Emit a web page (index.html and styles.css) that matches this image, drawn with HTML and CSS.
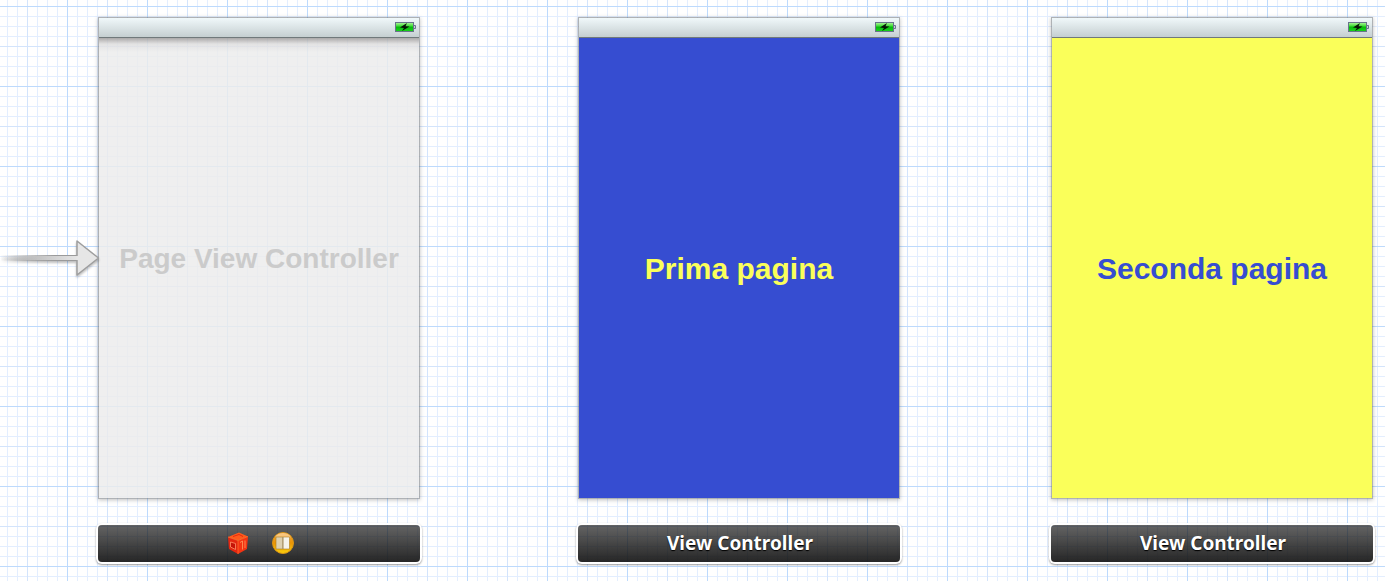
FILE: index.html
```
<!DOCTYPE html>
<html lang="it">
<head>
  <meta charset="UTF-8" />
  <meta name="viewport" content="width=device-width, initial-scale=1.0"/>
  <title>Storyboard</title>
  <link rel="stylesheet" href="styles.css">
</head>
<body>
  <!-- Shared shapes -->
  <svg class="defs" width="0" height="0" aria-hidden="true">
    <defs>
      <linearGradient id="charge" x1="0" y1="0" x2="0" y2="1">
        <stop offset="0" stop-color="#b4f5a0"/>
        <stop offset="0.4" stop-color="#3edb35"/>
        <stop offset="0.5" stop-color="#08b90c"/>
        <stop offset="1" stop-color="#18d51a"/>
      </linearGradient>
      <symbol id="battery" viewBox="0 0 22 12">
        <rect x="0.5" y="1.5" width="18" height="9" fill="url(#charge)" stroke="#68748a"/>
        <path d="M19 4.500h1.500v3H19" fill="#c8d2d6" stroke="#68748a"/>
        <path d="M12 2 5 6.500l4 .4L7 10 14.500 5.500l-4-.2z" fill="#071407"/>
      </symbol>
    </defs>
  </svg>

  <main class="canvas">
    <svg class="entry-arrow" width="100" height="42" viewBox="0 0 100 42" aria-hidden="true">
      <defs>
        <linearGradient id="shaft" x1="0" y1="0" x2="1" y2="0">
          <stop offset="0" stop-color="#989898" stop-opacity="0"/>
          <stop offset="0.7" stop-color="#9a9a9a"/>
        </linearGradient>
        <linearGradient id="shaft-fill" x1="0" y1="0" x2="1" y2="0">
          <stop offset="0" stop-color="#bbb" stop-opacity="0"/>
          <stop offset="0.5" stop-color="#c4c4c4"/>
          <stop offset="1" stop-color="#e6e6e6"/>
        </linearGradient>
      </defs>
      <rect x="0" y="17" width="78" height="6" fill="url(#shaft)"/>
      <rect x="0" y="18" width="78" height="4" fill="url(#shaft-fill)"/>
      <path d="M77 18V3L98.500 20 77 37V22" fill="#e6e6e6" stroke="#9e9e9e" stroke-width="1.500" stroke-linejoin="round"/>
    </svg>

    <section class="scene scene-root">
      <div class="screen">
        <div class="status-bar"><svg width="22" height="12"><use href="#battery"/></svg></div>
        <div class="view view-empty"><h2>Page View Controller</h2></div>
      </div>
      <div class="dock">
        <!-- First responder cube -->
        <svg width="24" height="24" viewBox="0 0 24 24" role="img" aria-label="First Responder">
          <path d="M2 6 13 1.500 22 5.500 12 9.500z" fill="#ff5a1c"/>
          <path d="M2 6 12 9.500V23L3 18z" fill="#e32610"/>
          <path d="M12 9.500 22 5.500 21 18 12 23z" fill="#f53312"/>
          <path d="M2 6 12 9.500 22 5.500M12 9.500V23" fill="none" stroke="#ff7a30" stroke-width="0.700"/>
          <path d="M4.500 11 9.500 12.500V18.500L4.500 16z" fill="#c41408" stroke="#ff9068" stroke-width="0.800"/>
          <path d="M14 11.500 16.500 10V18.500M19 9.500V17" fill="none" stroke="#ff9c5e" stroke-width="0.800"/>
          <path d="M7 5.500 13 3.500 17 5.500" fill="none" stroke="#e52c0c"/>
        </svg>
        <!-- Page view controller -->
        <svg width="24" height="24" viewBox="0 0 24 24" role="img" aria-label="Page View Controller">
          <defs>
            <linearGradient id="gold" x1="0" y1="0" x2="0" y2="1">
              <stop offset="0" stop-color="#f2a23c"/>
              <stop offset="0.5" stop-color="#e99405"/>
              <stop offset="1" stop-color="#fad00c"/>
            </linearGradient>
          </defs>
          <circle cx="12" cy="12" r="10.500" fill="url(#gold)" stroke="#d99414"/>
          <ellipse cx="12" cy="6" rx="7.500" ry="4" fill="#ffe0b0" opacity="0.6"/>
          <path d="M5 6H12V18H5z" fill="#ddd0af" stroke="#a97a1d" stroke-width="0.600"/>
          <path d="M12 6H18.500V18H12z" fill="#f5f3ea" stroke="#a97a1d" stroke-width="0.600"/>
          <path d="M11 6H12.500V18H11z" fill="#a99d80" opacity="0.6"/>
        </svg>
      </div>
    </section>

    <section class="scene scene-first">
      <div class="screen">
        <div class="status-bar"><svg width="22" height="12"><use href="#battery"/></svg></div>
        <div class="view view-blue"><h2>Prima pagina</h2></div>
      </div>
      <div class="dock">View Controller</div>
    </section>

    <section class="scene scene-second">
      <div class="screen">
        <div class="status-bar"><svg width="22" height="12"><use href="#battery"/></svg></div>
        <div class="view view-yellow"><h2>Seconda pagina</h2></div>
      </div>
      <div class="dock">View Controller</div>
    </section>
  </main>
</body>
</html>
```
FILE: styles.css
```
:root {
  --blue: #364dd1;
  --yellow: #faff5a;
  --line: #e3eeff;
  --line-mid: #d3e4fc;
  --line-major: #bddafd;
}

* {
  box-sizing: border-box;
}

body {
  margin: 0;
  font-family: "Liberation Sans", Arial, sans-serif;
}

.defs {
  position: absolute;
}

/* graph paper: 10px lines, heavier every 40 and 80 */
.canvas {
  position: relative;
  min-height: 100vh;
  overflow: hidden;
  background-color: #fff;
  background-image:
    linear-gradient(to right, var(--line-major) 1px, transparent 1px),
    linear-gradient(var(--line-major) 1px, transparent 1px),
    linear-gradient(to right, var(--line-mid) 1px, transparent 1px),
    linear-gradient(var(--line-mid) 1px, transparent 1px),
    linear-gradient(to right, var(--line) 1px, transparent 1px),
    linear-gradient(var(--line) 1px, transparent 1px);
  background-size: 80px 80px, 80px 80px, 40px 40px, 40px 40px, 10px 10px, 10px 10px;
  background-position: 67px 6px;
}

/* scenes sit freely on the canvas */
.scene {
  position: absolute;
  top: 17px;
  width: 322px;
}

.scene-root {
  left: 98px;
}

.scene-first {
  left: 578px;
}

.scene-second {
  left: 1051px;
}

.entry-arrow {
  position: absolute;
  left: 0;
  top: 238px;
  z-index: 1;
  filter: drop-shadow(0 2px 1px rgba(0, 0, 0, 0.25));
}

.screen {
  border: 1px solid rgba(110, 115, 120, 0.55);
  box-shadow: 0 1px 4px rgba(0, 0, 0, 0.25);
}

.status-bar {
  display: flex;
  align-items: center;
  justify-content: flex-end;
  height: 20px;
  padding: 0 2px 2px 0;
  background: linear-gradient(#f0f8fa, #c5cfd1);
  border-bottom: 1px solid #70797b;
}

.view {
  display: flex;
  align-items: center;
  justify-content: center;
  height: 460px;
  padding-top: 2px;
}

.view h2 {
  margin: 0;
  font-size: 30px;
  line-height: 36px;
}

.view-empty {
  padding: 0 0 18px;
  background:
    linear-gradient(rgba(70, 65, 65, 0.4), rgba(120, 115, 115, 0.1) 6px, transparent 14px),
    rgba(235, 235, 235, 0.82);
  color: #cbcbcb;
}

.view-empty h2 {
  font-size: 28px;
}

.view-blue {
  background: var(--blue);
  color: var(--yellow);
}

.view-yellow {
  background: var(--yellow);
  color: var(--blue);
}

.dock {
  display: flex;
  align-items: center;
  justify-content: center;
  gap: 21px;
  height: 37px;
  margin-top: 26px;
  padding: 0 0 2px 2px;
  border-radius: 4px;
  background: linear-gradient(rgba(20, 20, 20, 0.66), rgba(20, 20, 20, 0.92));
  box-shadow: 0 0 0 2px #fff, 0 1px 2px 2px rgba(0, 0, 0, 0.4);
  color: #fff;
  font-family: "Noto Sans", "Open Sans", sans-serif;
  font-size: 19px;
  font-weight: bold;
  text-shadow: 0 1px 1px #000;
}
```
